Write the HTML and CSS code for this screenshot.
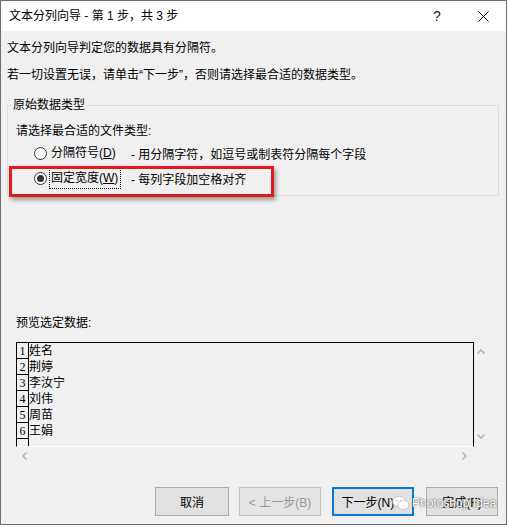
FILE: index.html
```html
<!DOCTYPE html>
<html lang="zh-CN">
<head>
<meta charset="utf-8">
<title>文本分列向导</title>
<link rel="stylesheet" href="styles.css">
</head>
<body>
<div class="window">
  <div class="titlebar">
    <span class="title">文本分列向导 - 第 1 步，共 3 步</span>
    <span class="tb-btn help">?</span>
    <span class="tb-btn close">
      <svg width="11" height="11" viewBox="0 0 11 11"><path d="M0.5 0.5 L10.5 10.5 M10.5 0.5 L0.5 10.5" stroke="#000" stroke-width="1" fill="none"/></svg>
    </span>
  </div>
  <div class="content">
    <p class="line l1">文本分列向导判定您的数据具有分隔符。</p>
    <p class="line l2">若一切设置无误，请单击“下一步”，否则请选择最合适的数据类型。</p>
    <fieldset class="group">
      <legend>原始数据类型</legend>
      <p class="line prompt">请选择最合适的文件类型:</p>
      <div class="radio-row first">
        <span class="radio"></span>
        <span class="rlabel">分隔符号(<u>D</u>)</span>
        <span class="desc">- 用分隔字符，如逗号或制表符分隔每个字段</span>
      </div>
      <div class="radio-row second">
        <span class="radio checked"></span>
        <span class="rlabel focus">固定宽度(<u>W</u>)</span>
        <span class="desc">- 每列字段加空格对齐</span>
      </div>
    </fieldset>
    <p class="line preview-label">预览选定数据:</p>
    <div class="preview">
      <div class="data-box">
        <div class="row"><span class="num">1</span><span class="cell">姓名</span></div>
        <div class="row"><span class="num">2</span><span class="cell">荆婷</span></div>
        <div class="row"><span class="num">3</span><span class="cell">李汝宁</span></div>
        <div class="row"><span class="num">4</span><span class="cell">刘伟</span></div>
        <div class="row"><span class="num">5</span><span class="cell">周苗</span></div>
        <div class="row"><span class="num">6</span><span class="cell">王娟</span></div>
        <div class="row"><span class="num"></span><span class="cell"></span></div>
      </div>
      <div class="vscroll">
        <svg class="arrow" width="8" height="5" viewBox="0 0 8 5"><path d="M0.5 4.5 L4 1 L7.5 4.5" stroke="#b4b4b4" stroke-width="1.5" fill="none"/></svg>
        <svg class="arrow" width="8" height="5" viewBox="0 0 8 5"><path d="M0.5 0.5 L4 4 L7.5 0.5" stroke="#b4b4b4" stroke-width="1.5" fill="none"/></svg>
      </div>
      <div class="hscroll">
        <svg class="arrow" width="5" height="8" viewBox="0 0 5 8"><path d="M4.5 0.5 L1 4 L4.5 7.5" stroke="#b4b4b4" stroke-width="1.5" fill="none"/></svg>
        <svg class="arrow" width="5" height="8" viewBox="0 0 5 8"><path d="M0.5 0.5 L4 4 L0.5 7.5" stroke="#b4b4b4" stroke-width="1.5" fill="none"/></svg>
      </div>
    </div>
    <div class="buttons">
      <button class="btn cancel">取消</button>
      <button class="btn prev" disabled>&lt; 上一步(B)</button>
      <button class="btn next">下一步(N) &gt;</button>
      <button class="btn finish">完成(F)</button>
    </div>
  </div>
  <div class="highlight"></div>
  <div class="watermark">
    <svg width="18" height="16" viewBox="0 0 18 16">
      <ellipse cx="7" cy="6.5" rx="6.3" ry="5.3" fill="#fff" stroke="#bbb" stroke-width="0.8"/>
      <path d="M3 10.5 L2.5 13 L5.5 11.5 Z" fill="#fff" stroke="#bbb" stroke-width="0.6"/>
      <ellipse cx="11.5" cy="10" rx="5.5" ry="4.5" fill="#fff" stroke="#bbb" stroke-width="0.8"/>
      <circle cx="5" cy="5.5" r="0.8" fill="#bbb"/>
      <circle cx="9" cy="5.5" r="0.8" fill="#bbb"/>
    </svg>
    <span class="wm-text">Photoshop Idea</span>
  </div>
</div>
</body>
</html>
```

FILE: styles.css
```css
* {
  box-sizing: border-box;
}

body {
  margin: 0;
  background: #ffffff;
  font-family: "Liberation Sans", "Noto Sans CJK SC", sans-serif;
  font-size: 12px;
  color: #000;
}

.window {
  position: relative;
  width: 507px;
  height: 525px;
  border: 1px solid #6e6e6e;
  background: #f0f0f0;
  display: flex;
  flex-direction: column;
}

.titlebar {
  height: 30px;
  flex-shrink: 0;
  background: #ffffff;
  display: flex;
  align-items: center;
}

.title {
  flex: 1;
  padding-left: 8px;
  line-height: 30px;
  white-space: nowrap;
}

.tb-btn {
  width: 46px;
  height: 30px;
  display: flex;
  align-items: center;
  justify-content: center;
}

.help {
  font-size: 14px;
  color: #222;
  padding-bottom: 1px;
}

.content {
  flex: 1;
  padding: 0 7px 0 6px;
  display: flex;
  flex-direction: column;
}

.line {
  margin: 0;
  line-height: 18px;
  white-space: nowrap;
}

.l1 {
  margin-top: 8px;
}

.l2 {
  margin-top: 9px;
}

.group {
  margin: 12px 0 0 0;
  padding: 0 0 6px 0;
  border: 1px solid #dcdcdc;
  min-width: 0;
}

.group legend {
  margin-left: 3px;
  padding: 0 2px;
  line-height: 18px;
}

.prompt {
  margin-top: 8px;
  padding-left: 8px;
}

.radio-row {
  display: flex;
  align-items: center;
  height: 22px;
  padding-left: 26px;
  white-space: nowrap;
}

.radio-row.first {
  margin-top: 2px;
}

.radio-row.second {
  margin-top: 3px;
}

.radio {
  width: 13px;
  height: 13px;
  border: 1px solid #333;
  border-radius: 50%;
  background: #fff;
  margin-right: 2px;
  display: flex;
  align-items: center;
  justify-content: center;
  flex-shrink: 0;
}

.radio.checked::after {
  content: "";
  width: 7px;
  height: 7px;
  border-radius: 50%;
  background: #333;
}

.rlabel {
  width: 72px;
  height: 22px;
  line-height: 20px;
  border: 1px dotted transparent;
  padding-left: 1px;
  flex-shrink: 0;
}

.rlabel.focus {
  border-color: #000;
}

.desc {
  margin-left: 10px;
}

.preview-label {
  margin-top: 118px;
  padding-left: 9px;
}

.preview {
  margin-top: 10px;
  margin-left: 9px;
  display: grid;
  grid-template-columns: 458px 17px;
  grid-template-rows: 105px 17px;
}

.data-box {
  border-top: 1px solid #000;
  border-left: 1px solid #000;
  border-right: 1px solid #000;
  border-bottom: 1px solid #fff;
  overflow: hidden;
}

.row {
  display: flex;
  height: 16px;
}

.num {
  width: 12px;
  height: 16px;
  border-right: 1px solid #000;
  border-bottom: 1px solid #000;
  font-family: "Liberation Serif", serif;
  font-size: 12px;
  line-height: 17px;
  text-align: center;
  flex-shrink: 0;
}

.cell {
  line-height: 16px;
  font-size: 12px;
}

.vscroll {
  display: flex;
  flex-direction: column;
  justify-content: space-between;
  align-items: flex-start;
  padding: 7px 0 8px 3px;
}

.hscroll {
  grid-column: 1;
  display: flex;
  justify-content: space-between;
  align-items: center;
  padding: 0 7px 0 6px;
}

.arrow {
  display: block;
}

.buttons {
  margin-top: 23px;
  display: flex;
  justify-content: flex-end;
  padding-right: 1px;
}

.btn {
  height: 29px;
  border: 1px solid #adadad;
  background: #e1e1e1;
  font-family: "Liberation Sans", "Noto Sans CJK SC", sans-serif;
  font-size: 12px;
  color: #000;
  padding: 0;
}

.cancel {
  width: 74px;
}

.prev {
  width: 82px;
  margin-left: 10px;
  color: #9a9a9a;
  border-color: #c4c4c4;
  background: #e4e4e4;
}

.next {
  width: 82px;
  margin-left: 11px;
  border: 2px solid #0a78d4;
}

.finish {
  width: 72px;
  margin-left: 12px;
}

.highlight {
  position: absolute;
  left: 8px;
  top: 165px;
  width: 265px;
  height: 31px;
  border: 3px solid #e01a1d;
  box-shadow: 2px 3px 4px rgba(0, 0, 0, 0.35);
}

.watermark {
  position: absolute;
  left: 391px;
  top: 494px;
  display: flex;
  align-items: center;
  gap: 2px;
}

.wm-text {
  font-family: "Liberation Sans", sans-serif;
  font-size: 12px;
  color: #fff;
  text-shadow: 0 0 2px #555, 0 0 1px #777;
}
```
